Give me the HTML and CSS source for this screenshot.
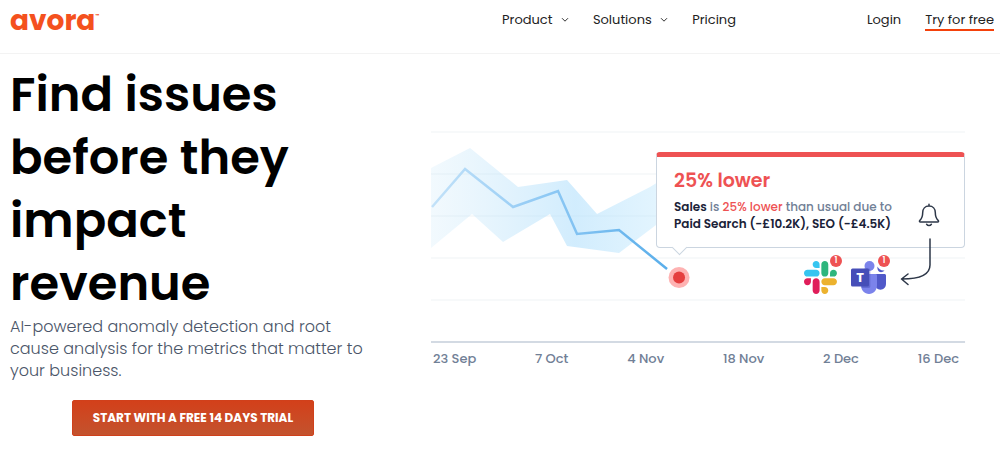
FILE: index.html
```
<!DOCTYPE html>
<html lang="en">
  <head>
    <meta charset="UTF-8" />
    <meta name="viewport" content="width=device-width, initial-scale=1" />
    <title>Avora</title>
    <link rel="stylesheet" href="styles.css">
  </head>
  <body>
    <header class="header">
      <a class="logo" href="#">avora<span class="logo-mark">™</span></a>
      <nav class="nav">
        <button class="nav-item" type="button">Product
          <svg class="chevron" viewBox="0 0 8 6"><path d="M1 1.2 4 4.2 7 1.2" /></svg>
        </button>
        <button class="nav-item" type="button">Solutions
          <svg class="chevron" viewBox="0 0 8 6"><path d="M1 1.2 4 4.2 7 1.2" /></svg>
        </button>
        <a class="nav-item" href="#">Pricing</a>
      </nav>
      <div class="account">
        <a class="nav-item" href="#">Login</a>
        <a class="nav-item try" href="#">Try for free</a>
      </div>
    </header>

    <main class="hero">
      <section class="intro">
        <h1>Find issues before they impact revenue</h1>
        <p>AI-powered anomaly detection and root cause analysis for the metrics that matter to your business.</p>
        <a class="cta" href="#">START WITH A FREE 14 DAYS TRIAL</a>
      </section>

      <section class="chart">
        <svg class="plot" viewBox="0 0 534 211">
          <defs>
            <linearGradient id="band" x1="0" x2="1" y1="0" y2="0">
              <stop offset="0" stop-color="#bee3f8" stop-opacity=".2" />
              <stop offset=".6" stop-color="#b3e0fc" stop-opacity=".6" />
              <stop offset="1" stop-color="#bee7fd" stop-opacity=".4" />
            </linearGradient>
            <linearGradient id="line" gradientUnits="userSpaceOnUse" x1="0" x2="236" y1="0" y2="0">
              <stop offset="0" stop-color="#c3e2f9" />
              <stop offset=".5" stop-color="#8dc8f4" />
              <stop offset="1" stop-color="#5aaeea" />
            </linearGradient>
          </defs>
          <path class="grid-line" d="M0 0H534M0 42H534M0 84H534M0 126H534M0 168H534" />
          <path class="axis" d="M0 210H534" />
          <path fill="url(#band)" d="M0 36 39 16 87 55 136 48 166 82 219 55 240 42V82L225 93 188 121 136 114 119 82 72 110 41 82 0 116Z" />
          <path class="series" stroke="url(#line)" d="M1 75 34 37 82 75 127 59 146 102 188 98 236 137" />
          <circle cx="248" cy="145.500" r="10.500" fill="#feb2b2" />
          <circle cx="248" cy="145.500" r="6" fill="#e53e3e" />
        </svg>
        <div class="dates">
          <span>23 Sep</span>
          <span>7 Oct</span>
          <span>4 Nov</span>
          <span>18 Nov</span>
          <span>2 Dec</span>
          <span>16 Dec</span>
        </div>

        <div class="alert">
          <div class="alert-card">
            <div>
              <h2>25% lower</h2>
              <p><strong>Sales</strong> is <em>25% lower</em> than usual due to<br><strong>Paid Search (-£10.2K), SEO (-£4.5K)</strong></p>
            </div>
            <svg class="bell" viewBox="0 0 22 24">
              <path d="M11 3C7 3 4.700 6 4.700 9.600c0 4.400-1 6.200-2.800 7.700-.8.7-.5 1.700.6 1.700h17c1.100 0 1.400-1 .6-1.700-1.800-1.500-2.800-3.300-2.800-7.700C17.300 6 15 3 11 3ZM11 3V1.300M8.600 21.300c1.200 1.600 3.600 1.600 4.800 0" />
            </svg>
          </div>
          <div class="channels">
            <div class="channel">
              <svg viewBox="0 0 123 123">
                <path fill="#e01e5a" d="M25.800 77.600c0 7.100-5.800 12.900-12.900 12.900S0 84.700 0 77.600s5.800-12.900 12.900-12.900h12.900v12.900zM32.300 77.600c0-7.100 5.800-12.900 12.900-12.900s12.900 5.800 12.900 12.900v32.300c0 7.100-5.800 12.900-12.900 12.900s-12.900-5.800-12.900-12.900V77.600z" />
                <path fill="#36c5f0" d="M45.200 25.800c-7.100 0-12.900-5.800-12.900-12.900S38.100 0 45.200 0s12.900 5.800 12.900 12.900v12.900H45.200zM45.200 32.300c7.100 0 12.900 5.800 12.900 12.900s-5.800 12.900-12.900 12.900H12.900C5.800 58.100 0 52.300 0 45.200s5.800-12.900 12.900-12.900h32.300z" />
                <path fill="#2eb67d" d="M97 45.200c0-7.100 5.800-12.900 12.900-12.900s12.900 5.800 12.900 12.900-5.800 12.900-12.900 12.900H97V45.200zM90.500 45.200c0 7.100-5.800 12.900-12.900 12.900s-12.900-5.800-12.900-12.900V12.900C64.700 5.800 70.500 0 77.600 0s12.900 5.800 12.900 12.900v32.300z" />
                <path fill="#ecb22e" d="M77.600 97c7.100 0 12.900 5.800 12.900 12.900s-5.800 12.900-12.900 12.900-12.900-5.800-12.900-12.900V97h12.900zM77.600 90.500c-7.100 0-12.900-5.800-12.900-12.900s5.800-12.900 12.900-12.900h32.300c7.100 0 12.900 5.800 12.900 12.900s-5.800 12.900-12.900 12.900H77.600z" />
              </svg>
              <span class="count">1</span>
            </div>
            <div class="channel">
              <svg viewBox="0 0 35 33">
                <path fill="#5059c9" d="M26.500 5.500c1 2 3.500 4.500 7 4-1 1.200-2.200 1.700-3.500 1.700-2.400 0-4-2.300-3.500-5.700Z" />
                <path fill="#5059c9" d="M23 13h10.500c.8 0 1.500.7 1.500 1.500v8c0 4-2.500 6.200-5.500 6.200S24 26.500 24 22.500Z" />
                <circle cx="18.500" cy="5" r="5" fill="#7b83eb" />
                <path fill="#7b83eb" d="M11 13h13.500c1 0 1.500.6 1.500 1.500V24c0 5.500-3.500 9-8 9s-8-3.500-8-9Z" />
                <path fill="#4b53bc" d="M13 7.500h4.500c1 0 1.800.7 1.800 1.700v16c0 1-.8 1.800-1.800 1.800h-7Z" opacity=".5" />
                <rect y="7.500" width="18" height="18" rx="1.500" fill="#464eb8" />
                <text class="teams-letter" x="9" y="21">T</text>
              </svg>
              <span class="count">1</span>
            </div>
            <svg class="arrow" viewBox="0 0 34 50">
              <path d="M31 2v26c0 9-8 14-28 14M9 37 2.500 42 9 47.500" />
            </svg>
          </div>
        </div>
      </section>
    </main>
  </body>
</html>
```
FILE: styles.css
```
* {
  box-sizing: border-box;
}
body {
  margin: 0;
  font-family: Poppins, Inter, sans-serif;
  color: #1a202c;
  background-color: #fff;
}
a {
  color: inherit;
  text-decoration: none;
}
.header {
  display: flex;
  align-items: center;
  height: 54px;
  padding: 0 6px 11px 10px;
  border-bottom: 1px solid #f3f3f3;
}
.logo {
  display: flex;
  width: 50%;
  font-size: 28px;
  font-weight: 700;
  line-height: 30px;
  color: #f4511e;
}
.logo-mark {
  font-size: 4px;
  line-height: 20px;
}
.nav,
.account {
  display: flex;
  align-items: flex-start;
  gap: 24px;
}
.account {
  margin-left: auto;
}
.nav-item {
  padding: 0;
  border: none;
  border-bottom: 2px solid transparent;
  background: none;
  font-family: inherit;
  font-size: 13px;
  line-height: 18px;
  color: #222;
  cursor: pointer;
}
.try {
  border-bottom-color: #f4410b;
}
.chevron {
  width: 8px;
  height: 6px;
  margin-left: 5px;
  vertical-align: 1px;
  fill: none;
  stroke: #333;
}
.hero {
  display: grid;
  grid-template-columns: 37fr 54fr;
  gap: 55px;
  padding: 9px 35px 40px 10px;
}
h1 {
  margin: 0;
  font-size: 48px;
  font-weight: 600;
  line-height: 63px;
  color: #000;
}
.intro {
  display: flex;
  flex-direction: column;
}
.intro p {
  margin: 1px 0 18px;
  font-size: 16px;
  font-weight: 300;
  line-height: 22px;
  color: #4a5568;
}
.cta {
  align-self: center;
  padding: 8px 20px;
  border: 1px solid #d0401b;
  border-radius: 2px;
  background: linear-gradient(#d3401a, #c3532e);
  font-size: 12px;
  font-weight: 700;
  line-height: 18px;
  color: #fff;
}
.chart {
  position: relative;
  padding-top: 69px;
}
.plot {
  display: block;
  width: 100%;
  overflow: visible;
}
.grid-line {
  stroke: #f7f9fa;
  stroke-width: 2;
}
.axis {
  stroke: #d3dae3;
  stroke-width: 2;
}
.series {
  fill: none;
  stroke-width: 2.5;
}
.dates {
  display: flex;
  justify-content: space-between;
  padding: 6px 6px 0 2px;
  font-size: 13px;
  font-weight: 500;
  line-height: 20px;
  color: #718096;
}
/* callout over the last point */
.alert {
  position: absolute;
  top: 89px;
  right: 0;
  width: 309px;
}
.alert-card {
  position: relative;
  display: flex;
  justify-content: space-between;
  align-items: flex-end;
  padding: 12px 24px 15px 17px;
  border: 1px solid #cbd5e0;
  border-top: 5px solid #ee5253;
  border-radius: 4px;
  background-color: #fff;
}
.alert-card::after {
  content: "";
  position: absolute;
  left: 17px;
  bottom: -6px;
  width: 10px;
  height: 10px;
  border: solid #cbd5e0;
  border-width: 0 1px 1px 0;
  background-color: #fff;
  transform: rotate(45deg);
}
h2 {
  margin: 0 0 5px;
  font-size: 19px;
  font-weight: 600;
  line-height: 24px;
  color: #ee5253;
}
.alert p {
  margin: 0;
  font-size: 12px;
  font-weight: 500;
  line-height: 17px;
  color: #718096;
  white-space: nowrap;
}
.alert strong {
  font-weight: 600;
  color: #1a2238;
}
.alert em {
  font-style: normal;
  color: #ee5253;
}
.bell {
  width: 22px;
  height: 24px;
  margin-bottom: 5px;
}
.bell,
.arrow {
  fill: none;
  stroke: #2d3748;
  stroke-width: 1.5;
  stroke-linecap: round;
  stroke-linejoin: round;
}
.channels {
  display: flex;
  justify-content: flex-end;
  gap: 13px;
  padding: 13px 32px 0 0;
}
.channel {
  position: relative;
}
.channel svg {
  display: block;
  width: 35px;
  height: 33px;
}
.count {
  position: absolute;
  top: -6px;
  right: -4px;
  width: 12px;
  height: 12px;
  border-radius: 50%;
  background-color: #ee5253;
  font-size: 8px;
  font-weight: 600;
  line-height: 12px;
  text-align: center;
  color: #fff;
}
.teams-letter {
  font-size: 13px;
  font-weight: 700;
  text-anchor: middle;
  fill: #fff;
}
.arrow {
  width: 34px;
  height: 50px;
  margin-top: -24px;
  position: relative;
}
```
